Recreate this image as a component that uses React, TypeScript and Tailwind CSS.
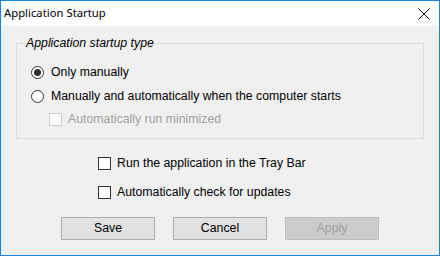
import React from 'react'

function Radio({ checked, label }: { checked?: boolean; label: string }) {
  return (
    <div className="flex h-[16px] items-center">
      <span className="flex h-[13px] w-[13px] items-center justify-center rounded-full border border-[#333333] bg-white">
        {checked && <span className="h-[7px] w-[7px] rounded-full bg-[#333333]" />}
      </span>
      <span className="ml-[7px] text-[12.3px] leading-[16px] text-black">{label}</span>
    </div>
  )
}

function Check({ label, disabled }: { label: string; disabled?: boolean }) {
  return (
    <div className="flex h-[16px] items-center">
      <span
        className={
          disabled
            ? 'h-[13px] w-[13px] border border-[#cccccc] bg-white'
            : 'h-[13px] w-[13px] border border-[#333333] bg-white'
        }
      />
      <span className={disabled ? 'ml-[6px] text-[12.3px] leading-[16px] text-[#a0a0a0]' : 'ml-[6px] text-[12.3px] leading-[16px] text-black'}>
        {label}
      </span>
    </div>
  )
}

export default function App() {
  return (
    <div className="flex h-[256px] w-[440px] flex-col border border-[#1883d7] bg-[#f0f0f0] font-['Liberation_Sans',Arial,sans-serif]">
      <div className="flex h-[25px] items-center justify-between bg-white pl-[3px] pr-[9px]">
        <span className="font-['Noto_Sans',sans-serif] text-[11.3px] text-black">Application Startup</span>
        <svg width="12" height="12" viewBox="0 0 12 12">
          <path d="M0.5 0.5 L11.5 11.5 M11.5 0.5 L0.5 11.5" stroke="#111" strokeWidth="1" fill="none" />
        </svg>
      </div>

      <div className="flex flex-col">
        <div className="relative ml-[15px] mt-[17px] h-[96px] w-[408px] border border-[#dcdcdc] pl-[14px] pt-[20px]">
          <span className="absolute left-[8px] top-[-9px] bg-[#f0f0f0] px-[1px] text-[12.3px] italic leading-[16px] text-black">
            Application startup type
          </span>
          <Radio checked label="Only manually" />
          <div className="mt-[8px]">
            <Radio label="Manually and automatically when the computer starts" />
          </div>
          <div className="ml-[18px] mt-[7px]">
            <Check disabled label="Automatically run minimized" />
          </div>
        </div>

        <div className="ml-[97px] mt-[16px] flex flex-col gap-[13px]">
          <Check label="Run the application in the Tray Bar" />
          <Check label="Automatically check for updates" />
        </div>

        <div className="ml-[60px] mt-[17px] flex gap-[18px]">
          <button className="h-[23px] w-[94px] border border-[#adadad] bg-[#e1e1e1] text-[12.3px] text-black">Save</button>
          <button className="h-[23px] w-[94px] border border-[#adadad] bg-[#e1e1e1] text-[12.3px] text-black">Cancel</button>
          <button className="h-[23px] w-[94px] border border-[#bfbfbf] bg-[#cccccc] text-[12.3px] text-[#a0a0a0]">Apply</button>
        </div>
      </div>
    </div>
  )
}
